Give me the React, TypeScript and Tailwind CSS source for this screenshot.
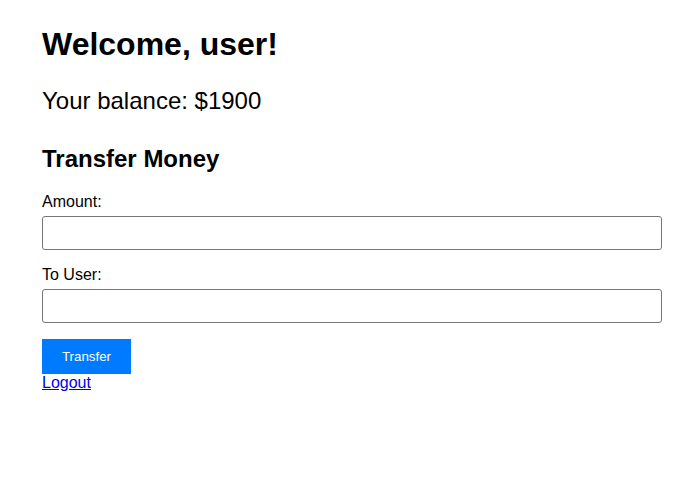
import React from 'react'

function App() {
    return (
        <div className="min-h-screen bg-white text-black px-[42px] pt-[26px]" style={{ fontFamily: '"Liberation Sans", Arial, sans-serif' }}>
            <h1 className="text-[32px] font-bold leading-[37px]">Welcome, user!</h1>
            <p className="text-[24px] leading-[28px] mt-[24px]">Your balance: $1900</p>
            <h2 className="text-[24px] font-bold leading-[28px] mt-[30px]">Transfer Money</h2>
            <form className="mt-[20px] w-[620px]" onSubmit={(e) => e.preventDefault()}>
                <label className="block text-[16px] leading-[18px]">Amount:</label>
                <input type="number" className="block w-full h-[34px] mt-[5px] border border-[#767676] rounded-[3px] px-2" />
                <label className="block text-[16px] leading-[18px] mt-[16px]">To User:</label>
                <input type="text" className="block w-full h-[34px] mt-[5px] border border-[#767676] rounded-[3px] px-2" />
                <button type="submit" className="block mt-[16px] w-[89px] h-[35px] bg-[#007bff] text-white text-[13.33px] font-medium">Transfer</button>
            </form>
            <a href="#" className="block w-fit text-[16px] leading-[18px] text-[#0000ee] underline">Logout</a>
        </div>
    )
}

export default App
